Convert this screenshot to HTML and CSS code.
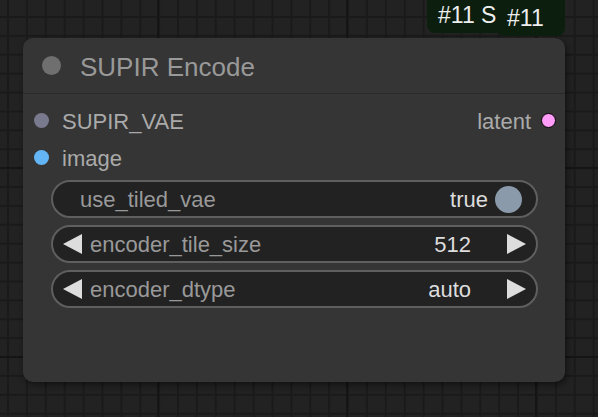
FILE: index.html
```html
<!DOCTYPE html>
<html>
<head>
<meta charset="utf-8">
<link rel="stylesheet" href="styles.css">
</head>
<body>
<div class="canvas">
  <div class="node">
    <div class="node-title">
      <span class="title-dot"></span>
      <span class="title-text">SUPIR Encode</span>
    </div>
    <div class="node-body">
      <div class="slot-row">
        <div class="slot in"><span class="dot dot-vae"></span><span class="slot-label">SUPIR_VAE</span></div>
        <div class="slot out"><span class="slot-label">latent</span><span class="dot dot-latent"></span></div>
      </div>
      <div class="slot-row">
        <div class="slot in"><span class="dot dot-image"></span><span class="slot-label">image</span></div>
      </div>
      <div class="widgets">
        <div class="widget toggle">
          <span class="w-label">use_tiled_vae</span>
          <span class="w-value">true</span>
          <span class="knob"></span>
        </div>
        <div class="widget number">
          <span class="arrow left"></span>
          <span class="w-label">encoder_tile_size</span>
          <span class="w-value">512</span>
          <span class="arrow right"></span>
        </div>
        <div class="widget number">
          <span class="arrow left"></span>
          <span class="w-label">encoder_dtype</span>
          <span class="w-value">auto</span>
          <span class="arrow right"></span>
        </div>
      </div>
    </div>
  </div>
  <div class="badge badge-a">#11 SUPIR Encode</div>
  <div class="badge badge-b">#11</div>
</div>
</body>
</html>
```
FILE: styles.css
```css
html, body {
  margin: 0;
  padding: 0;
}
body {
  width: 598px;
  height: 417px;
  overflow: hidden;
  font-family: "Liberation Sans", Arial, sans-serif;
}
.canvas {
  position: relative;
  width: 598px;
  height: 417px;
  background-color: #222222;
  background-image:
    linear-gradient(to right, #151515 0, #151515 2px, transparent 2px),
    linear-gradient(to bottom, #151515 0, #151515 2px, transparent 2px),
    linear-gradient(to right, #1a1a1a 0, #1a1a1a 1.5px, transparent 1.5px),
    linear-gradient(to bottom, #1a1a1a 0, #1a1a1a 1.5px, transparent 1.5px);
  background-size: 189px 189px, 189px 189px, 18.9px 18.9px, 18.9px 18.9px;
  background-position: 157px 0, 0 167px, 7px 0, 0 16px;
}
.node {
  position: absolute;
  left: 23px;
  top: 38px;
  width: 542px;
  height: 344px;
  background: #353535;
  border-radius: 10px;
  box-shadow: 2px 3px 6px rgba(0, 0, 0, 0.45);
  display: flex;
  flex-direction: column;
}
.node-title {
  height: 55px;
  border-bottom: 1px solid #2a2a2a;
  display: flex;
  align-items: center;
  padding-left: 19px;
  gap: 19px;
  flex-shrink: 0;
}
.title-dot {
  width: 19px;
  height: 19px;
  border-radius: 50%;
  background: #6f6f6f;
}
.title-text {
  font-size: 26px;
  color: #999999;
  line-height: 1;
  margin-top: 3px;
}
.node-body {
  padding-top: 8px;
  display: flex;
  flex-direction: column;
}
.slot-row {
  height: 37px;
  display: flex;
  align-items: center;
  justify-content: space-between;
}
.slot {
  display: flex;
  align-items: center;
}
.slot.in {
  padding-left: 11px;
  gap: 13px;
}
.slot.out {
  padding-right: 9px;
  gap: 10px;
  margin-left: auto;
}
.slot-label {
  font-size: 22px;
  color: #aaaaaa;
  line-height: 1;
  margin-top: 2px;
}
.dot {
  width: 15px;
  height: 15px;
  border-radius: 50%;
  display: block;
}
.dot-vae { background: #7a7a8e; }
.dot-image { background: #64b5f6; }
.dot-latent {
  width: 13px;
  height: 13px;
  background: #ff9cf9;
  border: 1.5px solid #000;
}
.widgets {
  margin-top: 4px;
  padding: 0 27px 0 28px;
  display: flex;
  flex-direction: column;
  gap: 7px;
}
.widget {
  height: 34px;
  border: 2px solid #5f5f5f;
  border-radius: 19px;
  background: #222222;
  display: flex;
  align-items: center;
  font-size: 22px;
  line-height: 1;
}
.w-label {
  color: #999999;
  flex: 1;
  margin-top: 2px;
}
.w-value {
  color: #dddddd;
  margin-top: 2px;
}
.toggle .w-label {
  padding-left: 27px;
}
.toggle .w-value {
  margin-right: 7px;
}
.knob {
  width: 27px;
  height: 27px;
  border-radius: 50%;
  background: #8a9aab;
  margin-right: 14px;
}
.arrow {
  width: 0;
  height: 0;
  border-top: 10px solid transparent;
  border-bottom: 10px solid transparent;
}
.arrow.left {
  border-right: 19px solid #dddddd;
  margin-left: 10px;
  margin-right: 8px;
}
.arrow.right {
  border-left: 19px solid #dddddd;
  margin-left: 36px;
  margin-right: 10px;
}
.badge {
  position: absolute;
  background: #0c1f0e;
  color: #eeeeee;
  font-size: 23px;
  line-height: 1;
  border-radius: 0 0 8px 8px;
  white-space: nowrap;
  overflow: hidden;
  box-sizing: border-box;
}
.badge-a {
  left: 427px;
  top: -8px;
  height: 41px;
  width: 110px;
  padding: 12px 0 0 11px;
}
.badge-b {
  left: 497px;
  top: -6px;
  height: 42px;
  width: 68px;
  padding: 13px 0 0 10px;
}
```
